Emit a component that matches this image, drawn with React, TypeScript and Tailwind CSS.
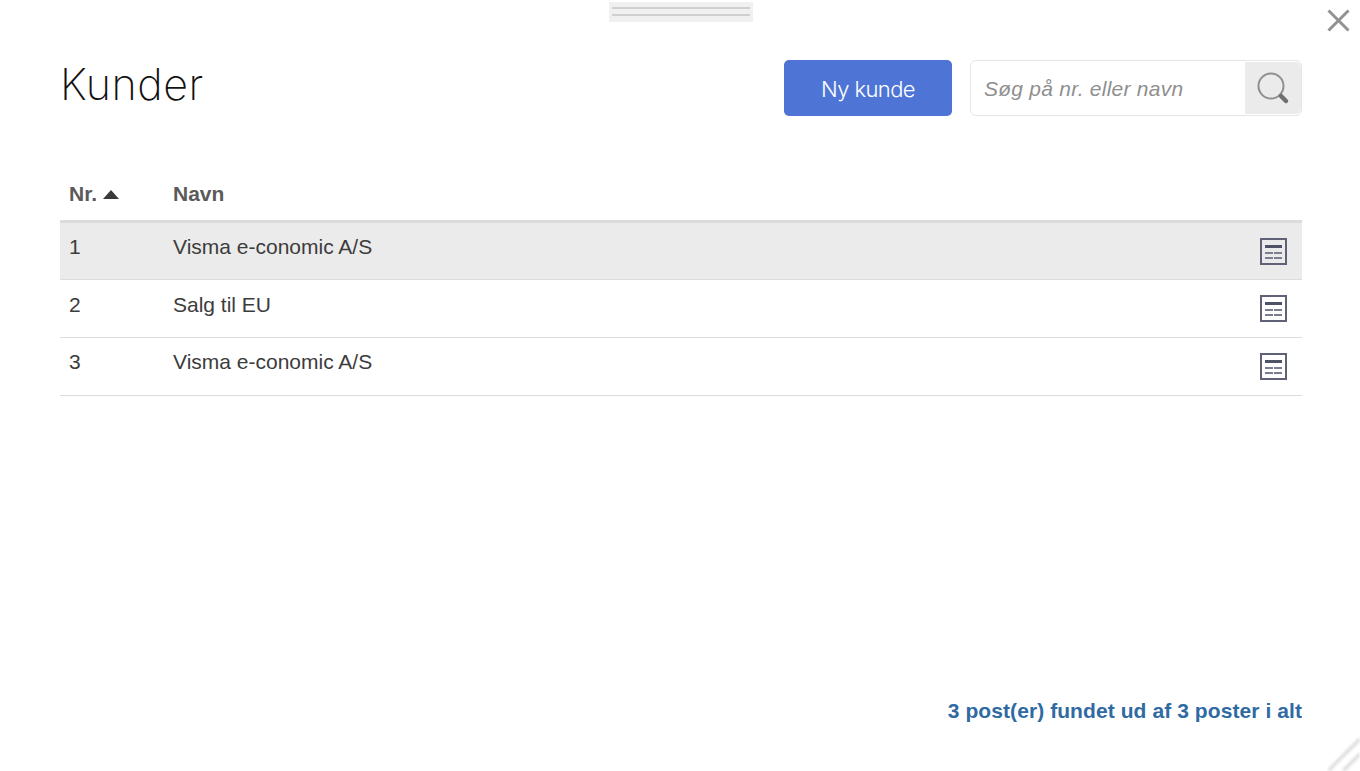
const rows = [
  { nr: 1, navn: "Visma e-conomic A/S", height: "h-[57px]", textTop: "pt-[10px]" },
  { nr: 2, navn: "Salg til EU", height: "h-[58px]", textTop: "pt-[11px]" },
  { nr: 3, navn: "Visma e-conomic A/S", height: "h-[58px]", textTop: "pt-[10px]" },
];

function DetailsIcon() {
  return (
    <svg width="28" height="28" viewBox="0 0 28 28" fill="none">
      <rect x="1" y="1" width="25" height="25" stroke="#5f6276" strokeWidth="2" />
      <rect x="5" y="7" width="17" height="3" fill="#4f5368" />
      <rect x="5" y="14" width="8" height="2" fill="#7b7e90" />
      <rect x="14" y="14" width="8" height="2" fill="#7b7e90" />
      <rect x="5" y="19" width="8" height="2" fill="#7b7e90" />
      <rect x="14" y="19" width="8" height="2" fill="#7b7e90" />
    </svg>
  );
}

export default function App() {
  return (
    <div className="relative h-[771px] w-[1360px] overflow-hidden bg-white font-['Liberation_Sans',Arial,sans-serif]">
      <div className="absolute left-[609px] top-[2px] flex h-[20px] w-[144px] flex-col gap-[5px] bg-[#f0f0f0] px-[3px] pt-[5px]">
        <div className="h-[2px] bg-[#cfcfcf]" />
        <div className="h-[2px] bg-[#cfcfcf]" />
      </div>

      <svg className="absolute left-[1327px] top-[9px]" width="23" height="23" viewBox="0 0 23 23">
        <path d="M1.5 1.5 L21.5 21.5 M21.5 1.5 L1.5 21.5" stroke="#929292" strokeWidth="3" />
      </svg>

      <div className="flex h-full flex-col pl-[60px] pr-[58px] pt-[60px]">
        <div className="flex h-[56px] items-start justify-between">
          <h1 className="-mt-[2px] font-['Inter',sans-serif] text-[43px] font-extralight leading-[52px] tracking-[0.5px] text-[#111]">
            Kunder
          </h1>
          <div className="flex gap-[18px]">
            <button className="h-[56px] w-[168px] rounded-[5px] bg-[#4e75d6] pt-[2px] font-['Inter',sans-serif] text-[22px] font-light tracking-[-0.6px] text-white">
              Ny kunde
            </button>
            <div className="flex h-[56px] w-[332px] items-stretch rounded-[6px] border border-[#e6e6e6] py-px pl-px">
              <div className="flex-1 pl-[12px] pt-[13px] text-[21px] italic leading-[28px] tracking-[0.25px] text-[#8f8f8f]">
                Søg på nr. eller navn
              </div>
              <div className="flex w-[56px] items-center justify-center rounded-r-[5px] bg-[#ebebeb]">
                <svg width="34" height="34" viewBox="0 0 34 34" fill="none">
                  <circle cx="15" cy="15" r="12.5" stroke="#8f8f8f" strokeWidth="2" />
                  <path d="M25 25 L30 30" stroke="#6f6f6f" strokeWidth="4.5" strokeLinecap="round" />
                </svg>
              </div>
            </div>
          </div>
        </div>

        <div className="mt-[54px] flex h-[53px] items-center border-b-[3px] border-[#dcdcdc] pb-[2px] text-[21px] font-bold text-[#5a5a5a]">
          <div className="flex w-[113px] items-center gap-[6px] pl-[9px]">
            Nr.
            <span className="h-0 w-0 border-x-[8.5px] border-b-[9px] border-x-transparent border-b-[#3a3a3a]" />
          </div>
          <div>Navn</div>
        </div>

        {rows.map((row) => (
          <div
            key={row.nr}
            className={`flex items-start border-b border-[#dcdcdc] text-[21px] text-[#3c3c3c] ${row.height} ${row.nr === 1 ? "bg-[#ebebeb]" : "bg-white"}`}
          >
            <div className={`w-[113px] pl-[9px] leading-[28px] ${row.textTop}`}>{row.nr}</div>
            <div className={`flex-1 leading-[28px] ${row.textTop}`}>{row.navn}</div>
            <div className="pr-[14px] pt-[15px]">
              <DetailsIcon />
            </div>
          </div>
        ))}

        <div className="mt-auto pb-[46px] text-right text-[21px] font-bold leading-[28px] tracking-[0.08px] text-[#2f6aa3]">
          3 post(er) fundet ud af 3 poster i alt
        </div>
      </div>

      <svg className="absolute bottom-0 right-0 blur-[1px]" width="32" height="34" viewBox="0 0 32 34">
        <path d="M0 34 L32 2 M15 34 L32 17" stroke="#e2e2e2" strokeWidth="4" />
      </svg>
    </div>
  );
}
